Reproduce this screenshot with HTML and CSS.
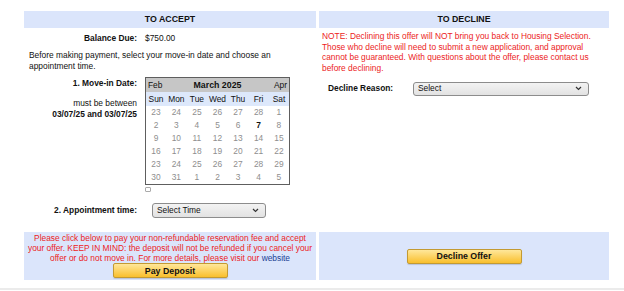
FILE: index.html
```html
<!DOCTYPE html>
<html>
<head>
<meta charset="utf-8">
<link rel="stylesheet" href="styles.css">
</head>
<body>
<div class="offer">
  <div class="hdr">TO ACCEPT</div>
  <div class="hdr">TO DECLINE</div>

  <div class="cell accept">
    <div class="form">
      <div class="lbl">Balance Due:</div>
      <div class="val">$750.00</div>

      <p class="intro">Before making payment, select your move-in date and choose an appointment time.</p>

      <div class="lbl movein">
        <div>1. Move-in Date:</div>
        <div class="range"><span class="norm">must be between</span><br>03/07/25 and 03/07/25</div>
      </div>
      <div class="val calwrap">
        <table class="cal">
          <tr class="title"><td class="prev">Feb</td><td colspan="5" class="month">March 2025</td><td class="next">Apr</td></tr>
          <tr class="dow"><th>Sun</th><th>Mon</th><th>Tue</th><th>Wed</th><th>Thu</th><th>Fri</th><th>Sat</th></tr>
          <tr><td>23</td><td>24</td><td>25</td><td>26</td><td>27</td><td>28</td><td>1</td></tr>
          <tr><td>2</td><td>3</td><td>4</td><td>5</td><td>6</td><td class="on">7</td><td>8</td></tr>
          <tr><td>9</td><td>10</td><td>11</td><td>12</td><td>13</td><td>14</td><td>15</td></tr>
          <tr><td>16</td><td>17</td><td>18</td><td>19</td><td>20</td><td>21</td><td>22</td></tr>
          <tr><td>23</td><td>24</td><td>25</td><td>26</td><td>27</td><td>28</td><td>29</td></tr>
          <tr><td>30</td><td>31</td><td>1</td><td>2</td><td>3</td><td>4</td><td>5</td></tr>
        </table>
        <div class="tick"></div>
      </div>

      <div class="lbl appt">2. Appointment time:</div>
      <div class="val appt">
        <div class="sel time"><span>Select Time</span><svg width="7" height="5" viewBox="0 0 7 5"><polyline points="1,1 3.5,3.5 6,1" fill="none" stroke="#333" stroke-width="1.2"/></svg></div>
      </div>
    </div>
  </div>

  <div class="cell decline">
    <p class="note">NOTE: Declining this offer will NOT bring you back to Housing Selection.<br>Those who decline will need to submit a new application, and approval<br>cannot be guaranteed. With questions about the offer, please contact us<br>before declining.</p>
    <div class="reason">
      <div class="rlbl">Decline Reason:</div>
      <div class="sel wide"><span>Select</span><svg width="7" height="5" viewBox="0 0 7 5"><polyline points="1,1 3.5,3.5 6,1" fill="none" stroke="#333" stroke-width="1.2"/></svg></div>
    </div>
  </div>

  <div class="foot left">
    <p class="warn">Please click below to pay your non-refundable reservation fee and accept<br>your offer. KEEP IN MIND: the deposit will not be refunded if you cancel your<br>offer or do not move in. For more details, please visit our <a href="#">website</a></p>
    <button class="btn pay">Pay Deposit</button>
  </div>
  <div class="foot right">
    <button class="btn dec">Decline Offer</button>
  </div>
</div>
<div class="rule"></div>
</body>
</html>
```
FILE: styles.css
```css
html, body {
  margin: 0;
  padding: 0;
  background: #fff;
}
body {
  font-family: "Liberation Sans", Arial, sans-serif;
  font-size: 8.4px;
  line-height: 11px;
  color: #111;
  width: 624px;
  height: 291px;
  overflow: hidden;
}
.offer {
  display: grid;
  grid-template-columns: 292px 290px;
  grid-template-rows: 17px 204px 48px;
  column-gap: 3px;
  margin: 11px 0 0 24px;
}
.hdr {
  background: #dbe5fb;
  font-weight: bold;
  text-align: center;
  line-height: 17px;
  font-size: 8.8px;
}
.form {
  display: grid;
  grid-template-columns: 113px auto;
  column-gap: 8px;
  padding-top: 5px;
}
.lbl {
  font-weight: bold;
  text-align: right;
}
.intro {
  grid-column: 1 / span 2;
  margin: 6px 0 5px 5px;
  width: 260px;
}
.movein {
  padding-top: 1px;
}
.range {
  margin-top: 9px;
}
.norm { font-weight: normal; }
.calwrap { display: flex; flex-direction: column; }
.cal {
  border-collapse: collapse;
  border: 1px solid #5e5e5e;
  width: 145px;
  font-size: 8.4px;
  table-layout: fixed;
}
.cal td, .cal th {
  padding: 0;
  text-align: center;
  height: 13px;
  line-height: 13px;
  color: #8e8e8e;
}
.cal .title td {
  background: #c6c6c6;
  color: #111;
  height: 14px;
  line-height: 14px;
}
.cal .title .month { font-weight: bold; font-size: 8.8px; }
.cal .title .prev { text-align: left; padding-left: 2px; }
.cal .title .next { text-align: right; padding-right: 2px; }
.cal .dow th {
  background: #dde8fb;
  color: #111;
  font-weight: normal;
  height: 14px;
  line-height: 14px;
}
.cal td.on { color: #111; font-weight: bold; }
.tick {
  width: 4px;
  height: 3px;
  border: 1px solid #aaa;
  border-radius: 1px;
  margin-top: 2px;
}
.appt { margin-top: 11px; }
.lbl.appt { padding-top: 2px; }
.val.appt { padding-left: 7px; }
.sel {
  display: flex;
  align-items: center;
  justify-content: space-between;
  box-sizing: border-box;
  height: 15px;
  border: 1px solid #8c8c8c;
  border-radius: 3px;
  background: linear-gradient(#f3f3f3, #e2e2e2);
  padding: 0 6px 0 4px;
  color: #111;
}
.sel.time { width: 114px; }
.sel.wide { width: 176px; height: 14px; }
.note {
  color: #ec1c24;
  margin: 3px 0 0 3px;
  line-height: 10.7px;
}
.reason {
  display: flex;
  align-items: center;
  margin-top: 8px;
}
.rlbl {
  font-weight: bold;
  width: 85px;
  padding-left: 9px;
}
.foot {
  background: #dbe5fb;
}
.foot.left {
  display: flex;
  flex-direction: column;
  align-items: center;
}
.foot.right {
  display: flex;
  align-items: center;
  justify-content: center;
}
.warn {
  color: #ec1c24;
  text-align: center;
  line-height: 10px;
  margin: 1px 0 0;
}
.warn a {
  color: #1c3f94;
  text-decoration: none;
}
.btn {
  font-family: "Liberation Sans", Arial, sans-serif;
  font-size: 8.8px;
  font-weight: bold;
  color: #111;
  width: 115px;
  height: 15px;
  padding: 0;
  border: 1px solid #c39a32;
  border-radius: 2px;
  background: linear-gradient(#ffe79b, #f9bf2c);
  box-shadow: 0 1px 1px rgba(0,0,0,0.15);
}
.rule {
  height: 2px;
  background: #ebebeb;
  margin-top: 8px;
}
```
